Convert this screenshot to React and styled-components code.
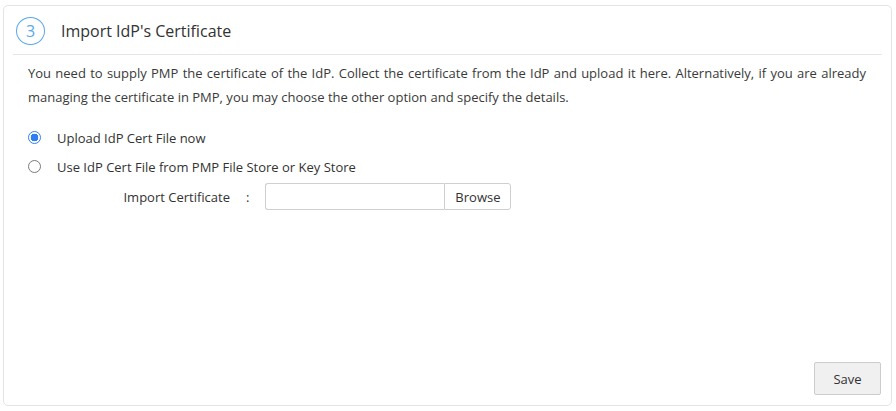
import React, { useState } from "react";
import styled, { createGlobalStyle } from "styled-components";

const Global = createGlobalStyle`
  html, body {
    margin: 0;
    padding: 0;
    background: #fff;
  }
  body {
    font-family: "Open Sans", "Liberation Sans", sans-serif;
    color: #333;
  }
  * {
    box-sizing: border-box;
  }
`;

const Panel = styled.section`
  margin: 5px 4px 0 3px;
  height: 401px;
  border: 1px solid #e4e4e4;
  border-radius: 5px;
  display: flex;
  flex-direction: column;
`;

const Header = styled.div`
  margin: 0 9px;
  padding: 2px 3px 0;
  height: 49px;
  display: flex;
  align-items: center;
  border-bottom: 1px solid #e6e6e6;
`;

const Step = styled.span`
  width: 29px;
  height: 28px;
  border: 1.5px solid #5aa8ec;
  border-radius: 50%;
  color: #5aa8ec;
  font-size: 16px;
  display: flex;
  align-items: center;
  justify-content: center;
`;

const Title = styled.h2`
  margin: 0 0 0 16px;
  font-size: 16px;
  font-weight: 400;
  color: #333;
`;

const Body = styled.div`
  padding: 6px 25px 0 24px;
  flex: 1;
`;

const Text = styled.p`
  margin: 0;
  font-size: 13px;
  line-height: 24px;
  color: #3a3a3a;
  text-align: justify;
`;

const Options = styled.div`
  margin-top: 14px;
  display: flex;
  flex-direction: column;
`;

const Option = styled.label`
  display: flex;
  align-items: center;
  height: 29px;
  font-size: 13px;
  color: #333;
  cursor: pointer;
`;

const Radio = styled.input`
  appearance: none;
  margin: 0 16px 0 0;
  width: 13px;
  height: 13px;
  border-radius: 50%;
  border: 1px solid #7a7a7a;
  background: #fff;
  &:checked {
    border: 1.5px solid #2f7ff3;
    background: radial-gradient(circle, #2f7ff3 0 3.6px, #fff 4.1px);
  }
`;

const Field = styled.div`
  display: flex;
  align-items: center;
  margin-top: 2px;
  font-size: 13px;
`;

const FieldLabel = styled.span`
  width: 202px;
  text-align: right;
  color: #333;
`;

const Colon = styled.span`
  margin: 0 16px 0 16px;
`;

const FileInput = styled.input`
  width: 179px;
  height: 27px;
  border: 1px solid #cfcfcf;
  border-right: none;
  border-radius: 3px 0 0 3px;
  outline: none;
  font: inherit;
`;

const Browse = styled.button`
  height: 27px;
  width: 67px;
  border: 1px solid #cfcfcf;
  border-radius: 0 3px 3px 0;
  background: #fff;
  color: #333;
  font: 13px "Open Sans", "Liberation Sans", sans-serif;
`;

const Footer = styled.div`
  display: flex;
  justify-content: flex-end;
  padding: 0 10px 10px;
`;

const Save = styled.button`
  width: 67px;
  height: 33px;
  border: 1px solid #cccccc;
  border-radius: 2px;
  background: #f0f0f0;
  color: #333;
  font: 13px "Open Sans", "Liberation Sans", sans-serif;
`;

export default function App() {
  const [choice, setChoice] = useState("upload");
  return (
    <>
      <Global />
      <Panel>
        <Header>
          <Step>3</Step>
          <Title>Import IdP's Certificate</Title>
        </Header>
        <Body>
          <Text>
            You need to supply PMP the certificate of the IdP. Collect the certificate from the IdP and upload it here. Alternatively, if you are already managing the certificate in PMP, you may choose the other option and specify the details.
          </Text>
          <Options>
            <Option>
              <Radio
                type="radio"
                name="cert"
                checked={choice === "upload"}
                onChange={() => setChoice("upload")}
              />
              Upload IdP Cert File now
            </Option>
            <Option>
              <Radio
                type="radio"
                name="cert"
                checked={choice === "store"}
                onChange={() => setChoice("store")}
              />
              Use IdP Cert File from PMP File Store or Key Store
            </Option>
          </Options>
          <Field>
            <FieldLabel>Import Certificate</FieldLabel>
            <Colon>:</Colon>
            <FileInput type="text" />
            <Browse>Browse</Browse>
          </Field>
        </Body>
        <Footer>
          <Save>Save</Save>
        </Footer>
      </Panel>
    </>
  );
}
